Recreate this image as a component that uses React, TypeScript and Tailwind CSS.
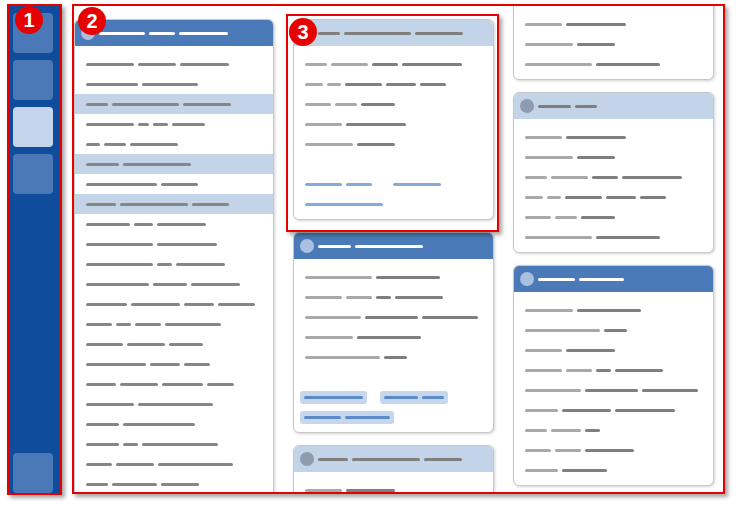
import React from 'react';

const toneClass: Record<string, string> = {
  l: 'bg-[#a9a9a9]',
  d: 'bg-[#7f7f7f]',
  m: 'bg-[#868686]',
  w: 'bg-white',
  k: 'bg-[#86aad8]',
  c: 'bg-[#5b8bc8]',
};

// "l22 d37 s13" -> bars of tone/width, s = blank spacer
const Bars = ({ spec }: { spec: string }) => (
  <>
    {spec
      .split(' ')
      .filter(Boolean)
      .map((t, i) => {
        const tone = t[0];
        const w = Number(t.slice(1));
        if (tone === 's') return <span key={i} className="shrink-0" style={{ width: w }} />;
        return (
          <span
            key={i}
            className={`h-[3px] shrink-0 rounded-full ${toneClass[tone]}`}
            style={{ width: w }}
          />
        );
      })}
  </>
);

type CardProps = {
  head: 'blue' | 'light';
  headBars: string;
  rows: string[];
  hl?: number[];
  className?: string;
  children?: React.ReactNode;
};

const Card = ({ head, headBars, rows, hl = [], className = '', children }: CardProps) => (
  <div
    className={`shrink-0 overflow-hidden rounded-[6px] border border-[#c8c8c8] bg-white pb-[5px] shadow-[1px_1px_3px_rgba(0,0,0,0.18)] ${className}`}
  >
    <div
      className={`flex h-[26px] items-center gap-1 pl-[6px] ${head === 'blue' ? 'bg-[#4a7bb8]' : 'bg-[#c3d4e9]'}`}
    >
      <span
        className={`h-[14px] w-[14px] shrink-0 rounded-full ${head === 'blue' ? 'bg-[#a9c0e0]' : 'bg-[#8e9bb0]'}`}
      />
      <Bars spec={headBars} />
    </div>
    <div className="pt-2">
      {rows.map((r, i) => (
        <div
          key={i}
          className={`flex h-5 items-center gap-1 px-[11px] ${hl.includes(i) ? 'bg-[#c3d4e8]' : ''}`}
        >
          <Bars spec={r} />
        </div>
      ))}
      {children}
    </div>
  </div>
);

const Chip = ({ spec }: { spec: string }) => (
  <div className="flex h-[13px] items-center gap-1 rounded-[3px] bg-[#c6d6ec] px-1">
    <Bars spec={spec} />
  </div>
);

const Badge = ({ n, className }: { n: number; className: string }) => (
  <div
    className={`absolute flex h-[28px] w-[28px] items-center justify-center rounded-full bg-[#e80000] font-['Liberation_Sans',Arial,sans-serif] text-[20px] leading-none font-bold text-white ${className}`}
  >
    {n}
  </div>
);

const listRows = [
  'm48 m38 m49',
  'm52 m56',
  'm22 m67 m48',
  'm48 m11 m15 m33',
  'm14 m22 m48',
  'm33 m68',
  'm71 m37',
  'm30 m68 m37',
  'm44 m19 m49',
  'm67 m60',
  'm67 m15 m49',
  'm63 m34 m49',
  'm41 m49 m30 m37',
  'm26 m15 m26 m56',
  'm37 m38 m34',
  'm60 m30 m26',
  'm30 m38 m41 m27',
  'm48 m75',
  'm33 m72',
  'm33 m15 m76',
  'm26 m38 m75',
  'm22 m45 m38',
  'm40 m30',
];

export default function App() {
  return (
    <div className="relative flex h-[509px] w-[739px] gap-[10px] overflow-hidden bg-white pt-[4px] pl-[7px]">
      {/* sidebar */}
      <div className="h-[491px] w-[55px] shrink-0 border-2 border-[#e80000] shadow-[3px_3px_4px_rgba(0,0,0,0.35)]">
        <div className="flex h-full flex-col gap-[7px] bg-[#0f4c9c] pt-[7px] pl-1">
          <div className="h-10 w-10 rounded-[4px] bg-[#4b79b7]" />
          <div className="h-10 w-10 rounded-[4px] bg-[#4b79b7]" />
          <div className="h-10 w-10 rounded-[4px] bg-[#c6d6ea]" />
          <div className="h-10 w-10 rounded-[4px] bg-[#4b79b7]" />
          <div className="mt-auto h-10 w-10 rounded-[4px] bg-[#4b79b7]" />
        </div>
      </div>

      {/* main */}
      <div className="h-[490px] w-[653px] shrink-0 overflow-hidden border-2 border-[#e80000] bg-white shadow-[3px_3px_4px_rgba(0,0,0,0.35)]">
        <div className="flex items-start gap-[19px] pt-[13px]">
          <Card
            head="blue"
            headBars="w46 w26 w49"
            rows={listRows}
            hl={[2, 5, 7]}
            className="w-[200px]"
          />

          <div className="flex w-[201px] shrink-0 flex-col gap-3">
            <Card
              head="light"
              headBars="d22 d67 d48"
              rows={['l22 l37 d26 d60', 'l18 l14 d37 d30 d26', 'l26 l22 d34', 'l37 d60', 'l48 d38', '', 'k37 k26 s13 k48', 'k78']}
            />
            <Card
              head="blue"
              headBars="w33 w68"
              rows={['l67 d64', 'l37 l26 d15 d48', 'l56 d53 d56', 'l48 d64', 'l75 d23']}
              className="pb-[8px]"
            >
              <div className="mt-6 flex flex-col gap-[7px] pl-[6px]">
                <div className="flex gap-[13px]">
                  <Chip spec="c59" />
                  <Chip spec="c34 c22" />
                </div>
                <div className="flex">
                  <Chip spec="c37 c45" />
                </div>
              </div>
            </Card>
            <Card head="light" headBars="d30 d68 d38" rows={['l37 d49', 'l48 d38', 'l26 d60']} />
          </div>

          <div className="mt-[-80px] flex w-[201px] shrink-0 flex-col gap-3">
            <Card
              head="light"
              headBars="d33 d48"
              rows={['l40 d60', 'l30 d45 d30', 'l37 d60', 'l48 d38', 'l67 d64']}
            />
            <Card
              head="light"
              headBars="d33 d22"
              rows={['l37 d60', 'l48 d38', 'l22 l37 d26 d60', 'l18 l14 d37 d30 d26', 'l26 l22 d34', 'l67 d64']}
            />
            <Card
              head="blue"
              headBars="w37 w45"
              rows={['l48 d64', 'l75 d23', 'l37 d49', 'l37 l26 d15 d48', 'l56 d53 d56', 'l33 d49 d60', 'l22 l30 d15', 'l26 l26 d49', 'l33 d45']}
            />
          </div>
        </div>
      </div>

      {/* callout frame over card 3 */}
      <div className="absolute top-[14px] left-[286px] h-[218px] w-[213px] border-2 border-[#e80000] shadow-[3px_3px_4px_rgba(0,0,0,0.35)]" />

      <Badge n={1} className="top-[6px] left-[15px]" />
      <Badge n={2} className="top-[7px] left-[78px]" />
      <Badge n={3} className="top-[18px] left-[289px]" />
    </div>
  );
}
